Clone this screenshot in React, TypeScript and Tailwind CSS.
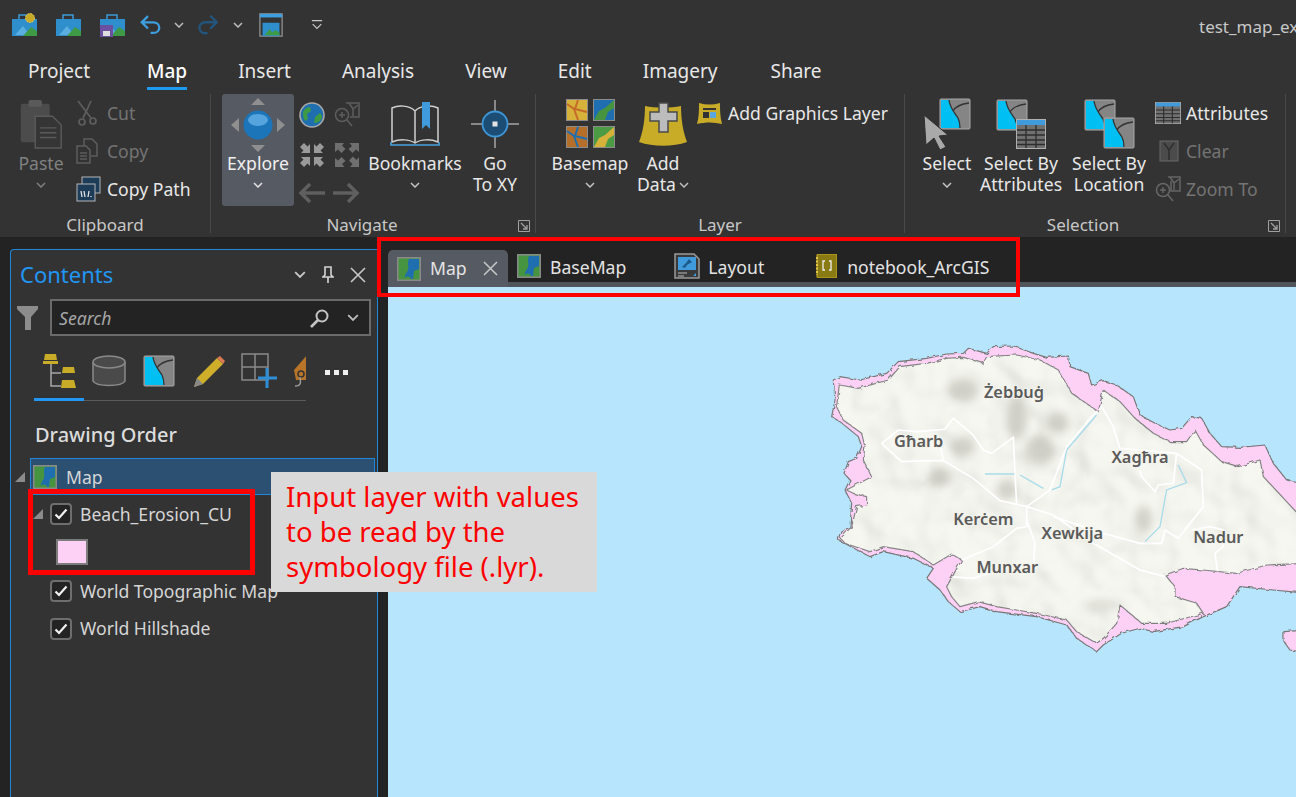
import { Fragment } from "react";
import type { ReactNode } from "react";

/* ---------- small drawn icons ---------- */
function Chevron({ className = "", color = "#bdbdbd", size = 10 }: { className?: string; color?: string; size?: number }) {
  return (
    <svg className={`shrink-0 ${className}`} width={size} height={size * 0.6} viewBox="0 0 10 6" fill="none">
      <path d="M1 1l4 4 4-4" stroke={color} strokeWidth="1.5" />
    </svg>
  );
}

function MapThumb({ size = 24 }: { size?: number }) {
  return (
    <svg className="shrink-0" width={size} height={size} viewBox="0 0 24 24">
      <rect x="0.75" y="0.75" width="22.5" height="22.5" fill="#46943f" stroke="#8a8a8a" strokeWidth="1.5" />
      <path d="M12 2h10v20h-8c-1-3-5-3-6-1-1-3 2-5 3-8 1-4-1-7 1-11z" fill="#1f6fb0" />
      <path d="M17 14l5-2v10h-6z" fill="#46943f" />
    </svg>
  );
}

function SelectionMap({ size = 32 }: { size?: number }) {
  return (
    <svg className="block shrink-0" width={size} height={size} viewBox="0 0 32 32">
      <rect x="1" y="1" width="30" height="30" rx="1" fill="#858585" stroke="#a8a8a8" />
      <path d="M2 2h8c1 8 5 12 9 18 2 4 2 8 2 10H2z" fill="#00c0f3" />
      <path d="M10 2c1 8 5 12 9 18 2 4 2 8 2 10M14 13c3-5 8-7 16-8" stroke="#333" strokeWidth="1.3" fill="none" />
    </svg>
  );
}

function Checkbox() {
  return (
    <span className="flex h-[22px] w-[22px] shrink-0 items-center justify-center rounded-[4px] border-2 border-[#6e6e6e] bg-[#232323]">
      <svg width="14" height="12" viewBox="0 0 14 12" fill="none">
        <path d="M1.5 6.5l3.5 3.5 7.5-8.5" stroke="#f2f2f2" strokeWidth="2.2" />
      </svg>
    </span>
  );
}

function TreeArrow() {
  return (
    <svg width="10" height="10" viewBox="0 0 10 10" className="shrink-0">
      <path d="M10 0v10H0z" fill="#8b8b8b" />
    </svg>
  );
}

/* ---------- ribbon pieces ---------- */
function SmallButton({ icon, label, off }: { icon: ReactNode; label: string; off?: boolean }) {
  return (
    <div className={`flex h-[38px] items-center whitespace-nowrap ${off ? "text-[#747474]" : "text-[#e8e8e8]"}`}>
      <span className="flex w-[31px] shrink-0 items-center">{icon}</span>
      {label}
    </div>
  );
}

function BigButton({
  icon,
  lines,
  width,
  chevron,
  off,
  className = "",
}: {
  icon: ReactNode;
  lines: ReactNode[];
  width: string;
  chevron?: boolean;
  off?: boolean;
  className?: string;
}) {
  return (
    <div className={`flex shrink-0 flex-col items-center ${width} ${off ? "text-[#808080]" : "text-[#e8e8e8]"} ${className}`}>
      <div className="flex h-[59px] items-center justify-center">{icon}</div>
      <div className="whitespace-nowrap text-center leading-[21px]">
        {lines.map((l, i) => (
          <Fragment key={i}>
            {i > 0 && <br />}
            {l}
          </Fragment>
        ))}
      </div>
      {chevron && (
        <div className="flex h-[21px] items-center">
          <Chevron color={off ? "#808080" : "#c4c4c4"} />
        </div>
      )}
    </div>
  );
}

function Launcher() {
  return (
    <svg width="12" height="12" viewBox="0 0 12 12" fill="none" stroke="#a0a0a0">
      <path d="M.5 11.5V.5h11v11z" />
      <path d="M3 3l6 6M9 5v4H5" strokeWidth="1.3" />
    </svg>
  );
}

function Group({
  label,
  width,
  labelPad = "",
  launcher,
  children,
}: {
  label: string;
  width: string;
  labelPad?: string;
  launcher?: boolean;
  children: ReactNode;
}) {
  return (
    <div className={`relative flex h-[139px] shrink-0 flex-col border-r border-[#494949] ${width}`}>
      <div className="flex h-[123px] items-start">{children}</div>
      <div className={`flex h-[16px] items-center justify-center text-[17px] text-[#c8c8c8] ${labelPad}`}>{label}</div>
      {launcher && (
        <span className="absolute bottom-[1px] right-[5px]">
          <Launcher />
        </span>
      )}
    </div>
  );
}

function ArrowsOut() {
  return (
    <svg width="26" height="26" viewBox="0 0 26 26" fill="#6f6f6f">
      <path d="M1 1h9L8 3.5l3.5 3.5-4 4L4 7.500 1 10zM25 1v9l-3-2.500-3.500 3.500-4-4L18 4l-2.500-3z" />
      <path d="M1 25v-9l3 2.500 3.500-3.500 4 4L8 22l2.500 3zM25 25h-9l2.500-3-3.500-3.500 4-4 3.500 3.500 2.500-3z" />
    </svg>
  );
}

function ArrowsIn() {
  return (
    <svg width="26" height="26" viewBox="0 0 26 26" fill="#9a9a9a">
      <path d="M11 11H2l2.500-2.500L1 5l4-4 3.500 3.500L11 2zM15 11V2l2.500 2.500L21 1l4 4-3.500 3.500L24 11z" />
      <path d="M11 15v9l-2.500-2.500L5 25l-4-4 3.500-3.500L2 15zM15 15h9l-2.500 2.500L25 21l-4 4-3.500-3.500L15 24z" />
    </svg>
  );
}

function ProjectIcon({ sun, save }: { sun?: boolean; save?: boolean }) {
  return (
    <svg className="shrink-0" width="25" height="25" viewBox="0 0 25 25">
      <path d="M7 7V3h10v4" fill="none" stroke="#3b9ad6" strokeWidth="1.5" />
      <rect x="0" y="7" width="25" height="17" fill="#2f8fcc" />
      <path d="M3 23l8-9 7 9z" fill="#5aaee0" />
      <path d="M11 24l8-9 6 4v5z" fill="#3f9a45" />
      {sun && <circle cx="18" cy="6" r="4.500" fill="#c8a928" stroke="#e5cd55" strokeDasharray="2 1" />}
      {save && (
        <g>
          <rect x="0" y="13" width="13" height="12" fill="#6b4fa0" />
          <rect x="3" y="19" width="7" height="5" fill="#ddd" />
        </g>
      )}
    </svg>
  );
}

function PasteIcon() {
  return (
    <svg width="44" height="50" viewBox="0 0 44 52">
      <rect x="1" y="5" width="30" height="40" rx="2" fill="#4c4c4c" />
      <rect x="9" y="1" width="14" height="7" rx="2" fill="#5a5a5a" />
      <path d="M16 18h18l9 9v24H16z" fill="#353535" stroke="#5a5a5a" strokeWidth="1.5" />
      <path d="M21 30h17M21 35h17M21 40h17" stroke="#5a5a5a" strokeWidth="1.5" />
    </svg>
  );
}

function GlobeIcon() {
  return (
    <svg width="26" height="26" viewBox="0 0 26 26">
      <circle cx="13" cy="13" r="12" fill="#1f6fb0" stroke="#a8a8a8" strokeWidth="1.6" />
      <path d="M4 10c1-3 4-5 7-5l1 4-4 3 1 5-3 2c-2-3-2-6-2-9zM15 21l1-6 5-4 2 3c0 4-3 7-8 7z" fill="#3f9a45" />
    </svg>
  );
}

function BookmarksIcon() {
  return (
    <svg width="50" height="46" viewBox="0 0 50 46" fill="none" stroke="#cfcfcf" strokeWidth="1.5">
      <path d="M25 10C19 4 8 4 2 7v34c7-3 17-3 23 1 6-4 16-4 23-1V7c-6-3-17-3-23 3zM25 10v32" />
      <path d="M1 41v3h48v-3" stroke="#4aa3df" strokeWidth="1.6" />
      <path d="M32 1h8v27l-4-4-4 4z" fill="#3f9bdc" stroke="none" />
    </svg>
  );
}

function GoToIcon() {
  return (
    <svg width="50" height="50" viewBox="0 0 50 50" fill="none">
      <path d="M25 1v14M25 35v14M1 25h12M37 25h12" stroke="#a6a6a6" strokeWidth="1.5" />
      <circle cx="25" cy="25" r="12.500" fill="#1c4d74" stroke="#3d97d8" strokeWidth="1.8" />
      <rect x="22.500" y="22.500" width="5" height="5" fill="#e4e4e4" />
    </svg>
  );
}

function BasemapIcon() {
  const boxes = ["#d6b23a", "#1f6fb0", "#b66f2a", "#4d9a45"];
  const overlays = ["#c66a2a", "#46943f", "#1f6fb0", "#d6b23a"];
  return (
    <div className="grid grid-cols-2 gap-[5px]">
      {boxes.map((c, i) => (
        <svg key={i} width="22" height="22" viewBox="0 0 22 22">
          <rect x="0.5" y="0.5" width="21" height="21" fill={c} stroke="#8c8c8c" />
          <path
            d={i % 2 ? "M1 21l5-9 6-3 9-8v8l-6 4-3 8z" : "M1 5l7 5 4 11M12 1l-3 9 12 3"}
            fill={i % 2 ? overlays[i] : "none"}
            stroke={i % 2 ? "none" : overlays[i]}
            strokeWidth="2"
          />
        </svg>
      ))}
    </div>
  );
}

function AddDataIcon() {
  return (
    <svg width="48" height="44" viewBox="0 0 48 44">
      <path d="M6 4c10 2 26 2 36 0 0 13 2 26 6 36-14 5-34 5-48 0C4 30 6 17 6 4z" fill="#c8ac27" />
      <path d="M20 1h9v9h9v9h-9v11h-9V19h-9v-9h9z" fill="#bcbcbc" stroke="#4a4a4a" strokeWidth="1.5" />
    </svg>
  );
}

function SelectIcon() {
  return (
    <div className="relative h-[52px] w-[48px]">
      <span className="absolute right-0 top-0">
        <SelectionMap />
      </span>
      <svg className="absolute bottom-0 left-0" width="28" height="36" viewBox="0 0 28 36">
        <path d="M1 1l24 20-9 1 7 11-6 3-6-12-8 7z" fill="#a9a9a9" stroke="#2f2f2f" />
      </svg>
    </div>
  );
}

function TableIcon({ w = 30, h = 30 }: { w?: number; h?: number }) {
  return (
    <svg className="block shrink-0" width={w} height={h} viewBox="0 0 30 30" preserveAspectRatio="none">
      <rect x="0.5" y="0.5" width="29" height="29" fill="#707070" stroke="#b0b0b0" />
      <rect x="1" y="1" width="28" height="5" fill="#3f9bdc" />
      <path d="M1 11h28M1 16h28M1 21h28M1 25.500h28M10 6v23M20 6v23" stroke="#2d2d2d" strokeWidth="1.3" />
    </svg>
  );
}

function SelectByAttr() {
  return (
    <div className="relative h-[50px] w-[50px]">
      <SelectionMap />
      <span className="absolute bottom-0 right-0">
        <TableIcon w={30} h={30} />
      </span>
    </div>
  );
}

function SelectByLoc() {
  return (
    <div className="relative h-[50px] w-[51px]">
      <SelectionMap />
      <span className="absolute bottom-0 right-0">
        <SelectionMap />
      </span>
    </div>
  );
}

/* ---------- map ---------- */
const outer =
  "40,150 60,140 120,150 200,130 235,95 320,85 380,72 430,70 445,55 500,70 520,50 580,48 640,70 680,82 745,78 750,110 805,130 815,165 850,152 890,165 940,200 960,255 1005,280 1050,300 1085,295 1115,260 1145,265 1170,310 1205,350 1260,352 1335,345 1360,400 1400,450 1460,465 1460,790 1360,780 1260,770 1220,830 1150,860 1090,890 1000,905 960,895 905,910 850,945 830,965 770,925 740,885 650,860 530,845 480,830 420,845 385,815 360,780 320,745 340,715 280,685 190,665 150,680 55,630 60,610 90,590 95,520 75,480 90,450 72,430 85,395 110,385 125,350 115,320 60,275 35,260 45,210";
const land =
  "58,165 115,175 205,150 240,110 320,100 380,85 430,82 490,100 500,80 590,75 660,90 715,120 755,190 835,245 850,180 900,215 945,265 1000,310 1050,335 1100,335 1125,300 1150,345 1205,395 1255,410 1320,390 1330,440 1400,515 1460,580 1460,700 1340,705 1250,730 1150,720 1090,715 1035,735 1065,770 1065,800 1130,820 1150,850 1040,880 965,880 900,825 890,880 850,925 830,940 770,905 740,870 650,850 530,830 475,815 420,830 395,800 380,770 425,690 395,672 340,705 280,665 190,650 150,665 75,640 62,625 95,590 110,530 140,525 140,500 100,490 80,480 155,440 130,390 135,350 125,310 70,270 50,230";
const roads = [
  "185,340 245,395 330,392 370,392 460,445 540,512 620,530 700,555 820,640 960,720 1035,740",
  "370,392 360,340",
  "185,340 235,300 290,305 375,298 400,265 460,315 490,360 515,370 580,322 585,430 590,520",
  "620,530 690,480 740,350 815,260 845,230 880,290 900,355 1070,370 1145,420 1150,530 1075,625 1035,600 1025,640 960,640 850,610 700,560",
  "620,530 620,590 590,595 520,650 425,690",
  "620,570 645,640 640,710",
  "390,740 460,745 520,725",
  "960,420 965,440 1005,485 1015,465 1060,460 1070,370",
  "1115,600 1170,590 1210,600 1210,650 1185,670 1195,740",
];
const rivers = [
  "495,432 585,432",
  "600,435 670,475",
  "695,480 720,470 740,360 830,255",
  "975,635 1020,590 1040,480 1100,458 1075,405",
];
const shades = [
  [430, 180, 45, 35],
  [590, 260, 30, 70],
  [660, 360, 45, 45],
  [710, 280, 35, 30],
  [430, 350, 35, 30],
  [970, 570, 25, 40],
  [360, 440, 30, 30],
  [560, 480, 30, 30],
  [850, 825, 60, 10],
];
const labels: [string, number, number][] = [
  ["Żebbuġ", 582, 203],
  ["Għarb", 296, 352],
  ["Xagħra", 960, 398],
  ["Kerċem", 490, 586],
  ["Xewkija", 757, 628],
  ["Nadur", 1195, 638],
  ["Munxar", 562, 728],
];

function MapArt() {
  return (
    <svg width="908" height="510" viewBox="0 0 908 510" className="block">
      <defs>
        <filter id="soft" x="-50%" y="-50%" width="200%" height="200%">
          <feGaussianBlur stdDeviation="14" />
        </filter>
        <filter id="rough" x="-5%" y="-5%" width="110%" height="110%">
          <feTurbulence type="fractalNoise" baseFrequency="0.06" numOctaves="2" seed="4" />
          <feDisplacementMap in="SourceGraphic" scale="12" />
        </filter>
        <filter id="relief" x="0" y="0" width="100%" height="100%">
          <feTurbulence type="fractalNoise" baseFrequency="0.009" numOctaves="2" seed="7" />
          <feDiffuseLighting surfaceScale="40" lightingColor="#ffffff">
            <feDistantLight azimuth="315" elevation="65" />
          </feDiffuseLighting>
          <feGaussianBlur stdDeviation="4" />
        </filter>
        <clipPath id="landclip">
          <polygon points={land} />
        </clipPath>
      </defs>
      <g transform="translate(432 43) scale(0.3333)">
        <g filter="url(#rough)">
          <polygon points={outer} fill="#fdd0f5" stroke="#777777" strokeWidth="3.500" strokeLinejoin="round" />
          <polygon points="1392,905 1460,900 1460,968 1410,960 1392,935" fill="#fdd0f5" stroke="#777777" strokeWidth="3.500" />
          <polygon points={land} fill="#f5f5ef" stroke="#777777" strokeWidth="3.500" strokeLinejoin="round" />
          <g clipPath="url(#landclip)">
            <rect x="0" y="40" width="1460" height="940" filter="url(#relief)" opacity="0.22" style={{ mixBlendMode: "multiply" }} />
          </g>
        </g>
        <g clipPath="url(#landclip)">
          <g filter="url(#soft)" fill="#a9a99c" opacity="0.5">
            {shades.map(([x, y, rx, ry], i) => (
              <ellipse key={i} cx={x} cy={y} rx={rx} ry={ry} />
            ))}
          </g>
          {rivers.map((p) => (
            <polyline key={p} points={p} fill="none" stroke="#a8dbe9" strokeWidth="4" />
          ))}
          {roads.map((p) => (
            <polyline key={p} points={p} fill="none" stroke="#ffffff" strokeWidth="5" />
          ))}
        </g>
        {labels.map(([t, x, y]) => (
          <text
            key={t}
            x={x}
            y={y}
            textAnchor="middle"
            fontSize="49"
            fontWeight="600"
            fill="#5a5a5a"
            stroke="#f3f3ec"
            strokeWidth="6"
            paintOrder="stroke"
            fontFamily="'Noto Sans', sans-serif"
          >
            {t}
          </text>
        ))}
      </g>
    </svg>
  );
}

/* ---------- page ---------- */
export default function App() {
  const tabs = ["Project", "Map", "Insert", "Analysis", "View", "Edit", "Imagery", "Share"];

  return (
    <div className="relative flex h-[797px] w-[1296px] flex-col overflow-hidden bg-[#232323] font-['Noto_Sans',sans-serif] text-[17.6px]">
      {/* RIBBON */}
      <header className="h-[237px] shrink-0 bg-[#333333]">
        <div className="flex h-[52px] items-center pb-[3px] pl-[12px]">
          <ProjectIcon sun />
          <span className="ml-[19px] flex"><ProjectIcon /></span>
          <span className="ml-[19px] flex"><ProjectIcon save /></span>
          <svg className="ml-[15px] shrink-0" width="23" height="24" viewBox="0 0 26 26" fill="none" stroke="#3d9fe0" strokeWidth="2.600">
            <path d="M9 3L2 10l7 7M2 10h13c9 0 9 12 0 12h-3" />
          </svg>
          <Chevron className="ml-[11px]" />
          <svg className="ml-[13px] shrink-0" width="22" height="24" viewBox="0 0 23 26" fill="none" stroke="#23557c" strokeWidth="2.600">
            <path d="M14 3l7 7-7 7M21 10H9c-9 0-9 12 0 12h2" />
          </svg>
          <Chevron className="ml-[14px]" />
          <svg className="ml-[15px] shrink-0" width="26" height="24" viewBox="0 0 27 27">
            <rect x="1" y="1" width="25" height="25" fill="#333" stroke="#8f8f8f" strokeWidth="1.500" />
            <rect x="1" y="1" width="25" height="4" fill="#3d9fe0" />
            <rect x="4" y="11" width="19" height="15" fill="#2f8fcc" />
            <path d="M6 25l6-7 5 7zM12 25l6-6 5 3v3z" fill="#3f9a45" />
          </svg>
          <svg className="ml-[27px] shrink-0" width="12" height="14" viewBox="0 0 14 14" fill="none" stroke="#c6c6c6" strokeWidth="1.500">
            <path d="M1 2h12M2 6l5 5 5-5" />
          </svg>
          <div className="absolute left-[1199px] top-[14px] whitespace-nowrap text-[17px] text-[#c8c8c8]">test_map_ex</div>
        </div>

        <nav className="flex h-[38px] gap-[51px] pl-[28px] text-[19px] text-[#e8e8e8]">
          {tabs.map((t) => (
            <div
              key={t}
              className={`flex h-[38px] items-center ${t === "Map" ? "ml-[6px] border-b-[3px] border-[#1d9bf0] pt-[3px] font-medium text-white" : ""} ${t === "Share" ? "ml-[2px]" : ""}`}
            >
              {t}
            </div>
          ))}
        </nav>

        <div className="flex pt-[4px]">
          <Group label="Clipboard" width="w-[211px]">
            <BigButton off width="w-[46px]" className="ml-[18px]" chevron lines={["Paste"]} icon={<PasteIcon />} />
            <div className="ml-[12px] flex flex-col">
              <SmallButton
                off
                label="Cut"
                icon={
                  <svg width="24" height="26" viewBox="0 0 24 26" fill="none" stroke="#5e5e5e" strokeWidth="1.7">
                    <path d="M2 1l13 17M15 1l-5 11-3 6" />
                    <circle cx="6" cy="22" r="3" />
                    <circle cx="17" cy="21" r="3" />
                  </svg>
                }
              />
              <SmallButton
                off
                label="Copy"
                icon={
                  <svg width="22" height="26" viewBox="0 0 22 26" fill="none" stroke="#5e5e5e" strokeWidth="1.5">
                    <path d="M8 8V1h8l5 5v12h-6" />
                    <path d="M1 8h9l4 4v13H1zM4 15h7M4 18h7M4 21h7" />
                  </svg>
                }
              />
              <SmallButton
                label="Copy Path"
                icon={
                  <svg width="25" height="26" viewBox="0 0 25 26" fill="none">
                    <rect x="6" y="1" width="18" height="16" fill="#1c3c58" stroke="#b5b5b5" />
                    <rect x="1" y="8" width="18" height="17" fill="#1c3c58" stroke="#b5b5b5" />
                    <path d="M5 15l1 6M8 15l1 6M13 15l-1 6M15 20v1" stroke="#e5e5e5" strokeWidth="1.3" />
                  </svg>
                }
              />
            </div>
          </Group>

          <Group label="Navigate" width="w-[325px]" labelPad="pr-[22px]" launcher>
            <div className="ml-[11px] flex h-[112px] w-[72px] shrink-0 flex-col items-center rounded-[3px] bg-[#565a63] text-[#f0f0f0]">
              <svg className="mt-[4px]" width="54" height="54" viewBox="0 0 54 54">
                <path d="M27 0l7 7H20zM27 54l-7-7h14zM0 27l8-7v14zM54 27l-8-7v14z" fill="#8f8f8f" />
                <circle cx="27" cy="27" r="14.500" fill="#1c75b8" />
                <ellipse cx="27" cy="22" rx="10" ry="6" fill="#56a4dd" />
              </svg>
              <div className="mt-[1px] h-[21px] leading-[21px]">Explore</div>
              <div className="flex h-[21px] items-center">
                <Chevron color="#e4e4e4" />
              </div>
            </div>
            <div className="grid w-[70px] grid-cols-2 justify-items-center">
              <div className="flex h-[42px] items-center"><GlobeIcon /></div>
              <div className="flex h-[42px] items-center">
                <svg width="26" height="26" viewBox="0 0 26 26" fill="none" stroke="#5e5e5e" strokeWidth="1.5">
                  <circle cx="8" cy="13" r="6.500" />
                  <path d="M5 13h6M8 10v6M13 18l5 6" />
                  <path d="M12 1h13v14h-9" />
                  <path d="M15 1l4 6 5-4M19 7v7" />
                </svg>
              </div>
              <div className="flex h-[38px] items-center"><ArrowsIn /></div>
              <div className="flex h-[38px] items-center"><ArrowsOut /></div>
              <div className="flex h-[38px] items-center">
                <svg width="27" height="22" viewBox="0 0 27 22" fill="none" stroke="#5f5f5f" strokeWidth="3.500"><path d="M12 2l-9 9 9 9M3 11h24" /></svg>
              </div>
              <div className="flex h-[38px] items-center">
                <svg width="27" height="22" viewBox="0 0 27 22" fill="none" stroke="#5f5f5f" strokeWidth="3.500"><path d="M15 2l9 9-9 9M24 11H0" /></svg>
              </div>
            </div>
            <BigButton width="w-[94px]" className="ml-[4px]" chevron lines={["Bookmarks"]} icon={<BookmarksIcon />} />
            <BigButton width="w-[64px]" className="ml-[1px]" lines={["Go", "To XY"]} icon={<GoToIcon />} />
          </Group>

          <Group label="Layer" width="w-[369px]">
            <BigButton width="w-[76px]" className="ml-[16px]" chevron lines={["Basemap"]} icon={<BasemapIcon />} />
            <BigButton
              width="w-[52px]"
              className="ml-[9px]"
              lines={[
                "Add",
                <span key="d" className="inline-flex items-center gap-[3px]">
                  Data
                  <Chevron />
                </span>,
              ]}
              icon={<AddDataIcon />}
            />
            <div className="ml-[8px] flex h-[38px] items-center whitespace-nowrap text-[#e8e8e8]">
              <svg className="mr-[6px]" width="25" height="23" viewBox="0 0 25 23">
                <path d="M2 1c7 2 14 2 21 0 0 7 0 14 2 21-8-2-16-2-25 0 2-7 2-14 2-21z" fill="#c8ac27" />
                <rect x="6" y="6" width="13" height="2" fill="#333" />
                <rect x="6" y="10" width="6" height="6" fill="#333" />
                <rect x="13" y="10" width="6" height="6" fill="#5ba7df" />
              </svg>
              Add Graphics Layer
            </div>
          </Group>

          <Group label="Selection" width="w-[381px]" labelPad="pr-[24px]" launcher>
            <BigButton width="w-[50px]" className="ml-[17px]" chevron lines={["Select"]} icon={<SelectIcon />} />
            <BigButton width="w-[84px]" className="ml-[7px]" lines={["Select By", "Attributes"]} icon={<SelectByAttr />} />
            <BigButton width="w-[76px]" className="ml-[8px]" lines={["Select By", "Location"]} icon={<SelectByLoc />} />
            <div className="ml-[8px] flex flex-col">
              <SmallButton label="Attributes" icon={<TableIcon w={26} h={22} />} />
              <SmallButton
                off
                label="Clear"
                icon={
                  <svg className="ml-[4px]" width="20" height="22" viewBox="0 0 20 22" fill="none">
                    <rect x="1" y="1" width="18" height="20" fill="#4b4b4b" stroke="#686868" />
                    <path d="M5 3l5 7 5-7M10 10v10" stroke="#2e2e2e" strokeWidth="1.5" />
                  </svg>
                }
              />
              <SmallButton
                off
                label="Zoom To"
                icon={
                  <svg width="26" height="26" viewBox="0 0 26 26" fill="none" stroke="#666" strokeWidth="1.5">
                    <circle cx="8" cy="14" r="6.500" />
                    <path d="M5 14h6M8 11v6M13 19l5 6" />
                    <path d="M13 1h12v14h-9V5" />
                    <path d="M15 1l4 6 5-4M19 7v7" />
                  </svg>
                }
              />
            </div>
          </Group>
        </div>
      </header>

      <div className="flex min-h-0 flex-1">
        {/* CONTENTS PANE */}
        <aside className="ml-[10px] mt-[12px] w-[368px] shrink-0 rounded-tl-[4px] border border-b-0 border-[#1f86d8] bg-[#333333] text-[#d6d6d6]">
          <div className="flex h-[49px] items-center pl-[9px]">
            <span className="text-[22px] text-[#2196f3]">Contents</span>
            <Chevron className="ml-auto" size={12} color="#c8c8c8" />
            <svg className="ml-[16px] shrink-0" width="12" height="18" viewBox="0 0 12 18" fill="none" stroke="#d4d4d4" strokeWidth="1.6">
              <path d="M3 1h6v8l2 2H1l2-2zM6 11v6" />
            </svg>
            <svg className="ml-[16px] mr-[11px] shrink-0" width="16" height="16" viewBox="0 0 16 16" fill="none" stroke="#c8c8c8" strokeWidth="1.6">
              <path d="M1 1l14 14M15 1L1 15" />
            </svg>
          </div>

          <div className="flex items-center pl-[6px]">
            <svg className="shrink-0" width="21" height="26" viewBox="0 0 21 26">
              <path d="M0 1h21v3l-7 8v13H8V12L0 4z" fill="#8c8c8c" />
            </svg>
            <div className="ml-[12px] flex h-[37px] w-[321px] items-center border-2 border-[#6a6a6a] bg-[#232323] pl-[7px] pr-[10px] pt-[1px]">
              <span className="italic text-[#a6a6a6]">Search</span>
              <svg className="ml-auto" width="19" height="19" viewBox="0 0 19 19" fill="none" stroke="#c4c4c4" strokeWidth="2">
                <circle cx="12" cy="7" r="5.500" />
                <path d="M8 11l-7 7" strokeWidth="2.600" />
              </svg>
              <Chevron className="ml-[18px]" size={12} />
            </div>
          </div>

          <div className="ml-[23px] mt-[16px] flex h-[38px] items-center">
            <div className="flex h-[38px] w-[272px] shrink-0 items-center overflow-hidden">
              <svg className="ml-[8px] shrink-0" width="35" height="36" viewBox="0 0 35 36" fill="none">
                <path d="M9 10v23h10M9 20h10" stroke="#a8a8a8" strokeWidth="1.5" />
                <path d="M3 1h11l1 6H2z M1 8h15v3H1z" fill="#c8ac27" />
                <path d="M21 14h11l1 6H20z M20 27h12l2 8H19z" fill="#c8ac27" />
              </svg>
              <svg className="ml-[15px] shrink-0" width="34" height="33" viewBox="0 0 34 33" fill="#4a4a4a" stroke="#8a8a8a" strokeWidth="1.5">
                <path d="M1 7v19c3 6 29 6 32 0V7" />
                <ellipse cx="17" cy="7" rx="16" ry="6" />
              </svg>
              <span className="ml-[17px] flex"><SelectionMap /></span>
              <svg className="ml-[18px] shrink-0" width="33" height="33" viewBox="0 0 33 33">
                <path d="M1 32l3-9L24 3l6 6-20 20z" fill="#cfae2a" />
                <path d="M24 3l3-2 5 5-2 3z" fill="#d97a55" />
                <path d="M1 32l3-9 6 6z" fill="#888" />
              </svg>
              <svg className="ml-[15px] shrink-0" width="37" height="36" viewBox="0 0 37 36" fill="none">
                <path d="M1 1h26v26H1zM14 1v26M1 14h26" stroke="#8a8a8a" strokeWidth="1.5" />
                <path d="M26 15v20M17 25h19" stroke="#2e8fd8" strokeWidth="3" />
              </svg>
              <svg className="ml-[15px] shrink-0" width="30" height="34" viewBox="0 0 30 34">
                <path d="M1 16L14 1v25H3z" fill="#b87428" />
                <circle cx="8" cy="20" r="3" fill="none" stroke="#333" strokeWidth="1.5" />
                <path d="M7 23c1 6 1 9-5 9" fill="none" stroke="#9a9a9a" strokeWidth="1.5" />
              </svg>
            </div>
            <div className="ml-[19px] flex gap-[4px] pt-[3px]">
              <span className="h-[5px] w-[5px] bg-[#eeeeee]" />
              <span className="h-[5px] w-[5px] bg-[#eeeeee]" />
              <span className="h-[5px] w-[5px] bg-[#eeeeee]" />
            </div>
          </div>

          <div className="ml-[23px] mt-[8px] flex h-[3px] w-[272px] items-end">
            <div className="h-[3px] w-[50px] bg-[#2196f3]" />
            <div className="h-px flex-1 bg-[#5a5a5a]" />
          </div>

          <div className="mt-[20px] pl-[24px] text-[20px] font-medium leading-[27px] text-[#dcdcdc]">Drawing Order</div>

          <div className="ml-[4px] mt-[10px] flex">
            <div className="flex w-[15px] items-center"><TreeArrow /></div>
            <div className="flex h-[37px] w-[345px] items-center border border-[#1f86d8] bg-[#2c5072]">
              <span className="ml-[2px] flex"><MapThumb size={24} /></span>
              <span className="ml-[9px] pt-[1px]">Map</span>
            </div>
          </div>

          <div className="flex h-[38px] items-center pl-[22px]">
            <TreeArrow />
            <span className="ml-[7px]"><Checkbox /></span>
            <span className="ml-[8px]">Beach_Erosion_CU</span>
          </div>
          <div className="ml-[45px] mt-[6px] h-[26px] w-[32px] border-2 border-[#7c7c7c] bg-[#fdd0f5]" />
          <div className="mt-[7px] flex h-[38px] items-center pl-[39px]">
            <Checkbox />
            <span className="ml-[8px] whitespace-nowrap">World Topographic Map</span>
          </div>
          <div className="flex h-[37px] items-center pl-[39px]">
            <Checkbox />
            <span className="ml-[8px]">World Hillshade</span>
          </div>
        </aside>

        {/* VIEW TABS + MAP */}
        <main className="ml-[10px] flex min-w-0 flex-1 flex-col">
          <div className="flex h-[50px] shrink-0 items-end border-b-[5px] border-[#50545b] text-[#e4e4e4]">
            <div className="-mb-[5px] flex h-[37px] w-[120px] shrink-0 items-center rounded-t-[5px] bg-[#555a63] pl-[9px]">
              <MapThumb size={24} />
              <span className="ml-[9px]">Map</span>
              <svg className="ml-[16px] shrink-0" width="15" height="15" viewBox="0 0 15 15" fill="none" stroke="#c8c8c8" strokeWidth="1.5">
                <path d="M1 1l13 13M14 1L1 14" />
              </svg>
            </div>
            <div className="flex h-[32px] items-center pl-[9px]">
              <MapThumb size={24} />
              <span className="ml-[9px] pt-[3px]">BaseMap</span>
            </div>
            <div className="ml-[48px] flex h-[32px] items-center">
              <svg className="shrink-0" width="26" height="26" viewBox="0 0 26 26">
                <path d="M1 1h19l5 5v19H1z" fill="#3a3a3a" stroke="#9a9a9a" strokeWidth="1.5" />
                <rect x="4" y="4" width="18" height="13" fill="#3f9bdc" />
                <path d="M8 14l4-4 3-4 3 3-5 3-2 3z" fill="#1c5a8c" />
                <path d="M4 20h9M4 23h6" stroke="#bbb" />
                <path d="M19 23l3-3v3z" fill="#3f9bdc" />
              </svg>
              <span className="ml-[8px] pt-[3px]">Layout</span>
            </div>
            <div className="ml-[52px] flex h-[32px] items-center">
              <svg className="shrink-0" width="21" height="24" viewBox="0 0 21 24">
                <rect x="1" y="0" width="20" height="24" rx="1" fill="#8a7a14" stroke="#c8ac27" />
                <path d="M1 3v18" stroke="#e0c94a" strokeWidth="2" strokeDasharray="2 1.5" />
                <path d="M9 7H7v9h2M13 7h2v9h-2" stroke="#eee" strokeWidth="1.3" fill="none" />
              </svg>
              <span className="ml-[10px] pt-[3px]">notebook_ArcGIS</span>
            </div>
          </div>
          <div className="min-h-0 flex-1 bg-[#b6e5fd]">
            <MapArt />
          </div>
        </main>
      </div>

      {/* ANNOTATIONS */}
      <div className="absolute left-[377px] top-[237px] h-[60px] w-[643px] border-[4px] border-[#ff0000]" />
      <div className="absolute left-[28px] top-[489px] h-[86px] w-[227px] border-[5px] border-[#ff0000]" />
      <div className="absolute left-[271px] top-[472px] h-[120px] w-[326px] bg-[#d9d9d9] pl-[15px] pt-[7px] text-[27.5px] leading-[35px] text-[#ff0000]">
        Input layer with values
        <br />
        to be read by the
        <br />
        symbology file (.lyr).
      </div>
    </div>
  );
}
